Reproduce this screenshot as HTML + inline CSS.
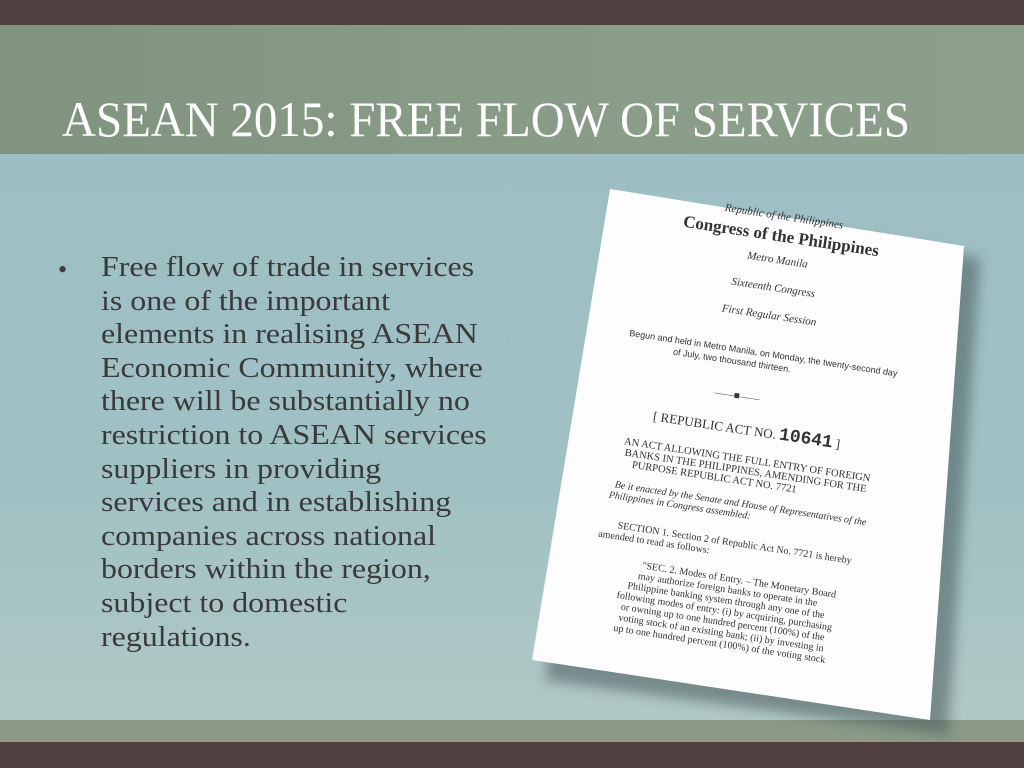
<!DOCTYPE html>
<html><head><meta charset="utf-8"><style>
html,body{margin:0;padding:0}
body{width:1024px;height:768px;position:relative;overflow:hidden;background:#9fbfc2;font-family:"Liberation Serif",serif}
.top{position:absolute;left:0;top:0;width:1024px;height:25px;background:#4f3f3f}
.hdr{position:absolute;left:0;top:25px;width:1024px;height:129px;background:linear-gradient(90deg,#7f937f,#8a9d89 60%,#8b9f8b)}
.mid{position:absolute;left:0;top:154px;width:1024px;height:566px;background:linear-gradient(180deg,#9dbfc3 0%,#a0c1c4 60%,#b0c8c4 100%)}
.gb{position:absolute;left:0;top:720px;width:1024px;height:22px;background:#8a9a86}
.bot{position:absolute;left:0;top:742px;width:1024px;height:26px;background:#4f3f3f}
.title{position:absolute;left:62px;top:94px;font-size:50px;color:#fff;white-space:nowrap;line-height:1;transform:scaleX(0.94);transform-origin:left top}
.body{position:absolute;left:101px;top:251px;font-size:28px;line-height:33.6px;color:#3a3a3a;white-space:nowrap;transform:scaleX(1.14);transform-origin:left top}
.bul{position:absolute;left:58px;top:253px;font-size:26px;line-height:33.6px;color:#3a3a3a}
</style></head><body>
<div class="top"></div><div class="hdr"></div><div class="mid"></div><div class="gb"></div><div class="bot"></div>
<div class="title">ASEAN 2015: FREE FLOW OF SERVICES</div>
<div class="bul">•</div>
<div class="body">Free flow of trade in services<br>is one of the important<br>elements in realising ASEAN<br>Economic Community, where<br>there will be substantially no<br>restriction to ASEAN services<br>suppliers in providing<br>services and in establishing<br>companies across national<br>borders within the region,<br>subject to domestic<br>regulations.</div>
<svg width="1024" height="768" style="position:absolute;left:0;top:0">
<defs><filter id="b"><feGaussianBlur stdDeviation="6"/></filter></defs>
<polygon points="625,205 980,258 948,735 545,680" fill="#4a5a5c" opacity="0.55" filter="url(#b)"/>
<polygon points="610,189 964,246 930,720 532,660" fill="#fdfdfd"/>
<g transform="translate(748,455) rotate(8.6)" font-family="Liberation Serif,serif" fill="#333" text-anchor="middle">
<text x="0" y="-238" font-size="11" font-style="italic">Republic of the Philippines</text>
<text x="0" y="-216" font-size="17" font-weight="bold">Congress of the Philippines</text>
<text x="0" y="-194" font-size="11" font-style="italic">Metro Manila</text>
<text x="0" y="-166" font-size="11" font-style="italic">Sixteenth Congress</text>
<text x="0" y="-138" font-size="11" font-style="italic">First Regular Session</text>
<text x="0" y="-100" font-size="9" font-family="Liberation Sans,sans-serif">Begun and held in Metro Manila, on Monday, the twenty-second day</text>
<text x="-30" y="-88" font-size="9" font-family="Liberation Sans,sans-serif">of July, two thousand thirteen.</text>
<text x="-20" y="-54" font-size="10">——■——</text>
<text x="-5" y="-20" font-size="13">[ REPUBLIC ACT NO. <tspan font-size="18" font-weight="bold" font-family="Liberation Mono,monospace">10641</tspan> ]</text>
<text x="0" y="8" font-size="10.5">AN ACT ALLOWING THE FULL ENTRY OF FOREIGN</text>
<text x="0" y="19" font-size="10.5">BANKS IN THE PHILIPPINES, AMENDING FOR THE</text>
<text x="-30" y="30" font-size="10.5">PURPOSE REPUBLIC ACT NO. 7721</text>
<text x="0" y="52" font-size="10" font-style="italic">Be it enacted by the Senate and House of Representatives of the</text>
<text x="-60" y="63" font-size="10" font-style="italic">Philippines in Congress assembled:</text>
<text x="0" y="92" font-size="10">SECTION 1. Section 2 of Republic Act No. 7721 is hereby</text>
<text x="-80" y="103" font-size="10">amended to read as follows:</text>
<text x="10" y="128" font-size="10">"SEC. 2. Modes of Entry. – The Monetary Board</text>
<text x="0" y="139" font-size="10">may authorize foreign banks to operate in the</text>
<text x="0" y="150" font-size="10">Philippine banking system through any one of the</text>
<text x="0" y="161" font-size="10">following modes of entry: (i) by acquiring, purchasing</text>
<text x="0" y="172" font-size="10">or owning up to one hundred percent (100%) of the</text>
<text x="0" y="183" font-size="10">voting stock of an existing bank; (ii) by investing in</text>
<text x="0" y="194" font-size="10">up to one hundred percent (100%) of the voting stock</text>
</g>
</svg>
</body></html>
